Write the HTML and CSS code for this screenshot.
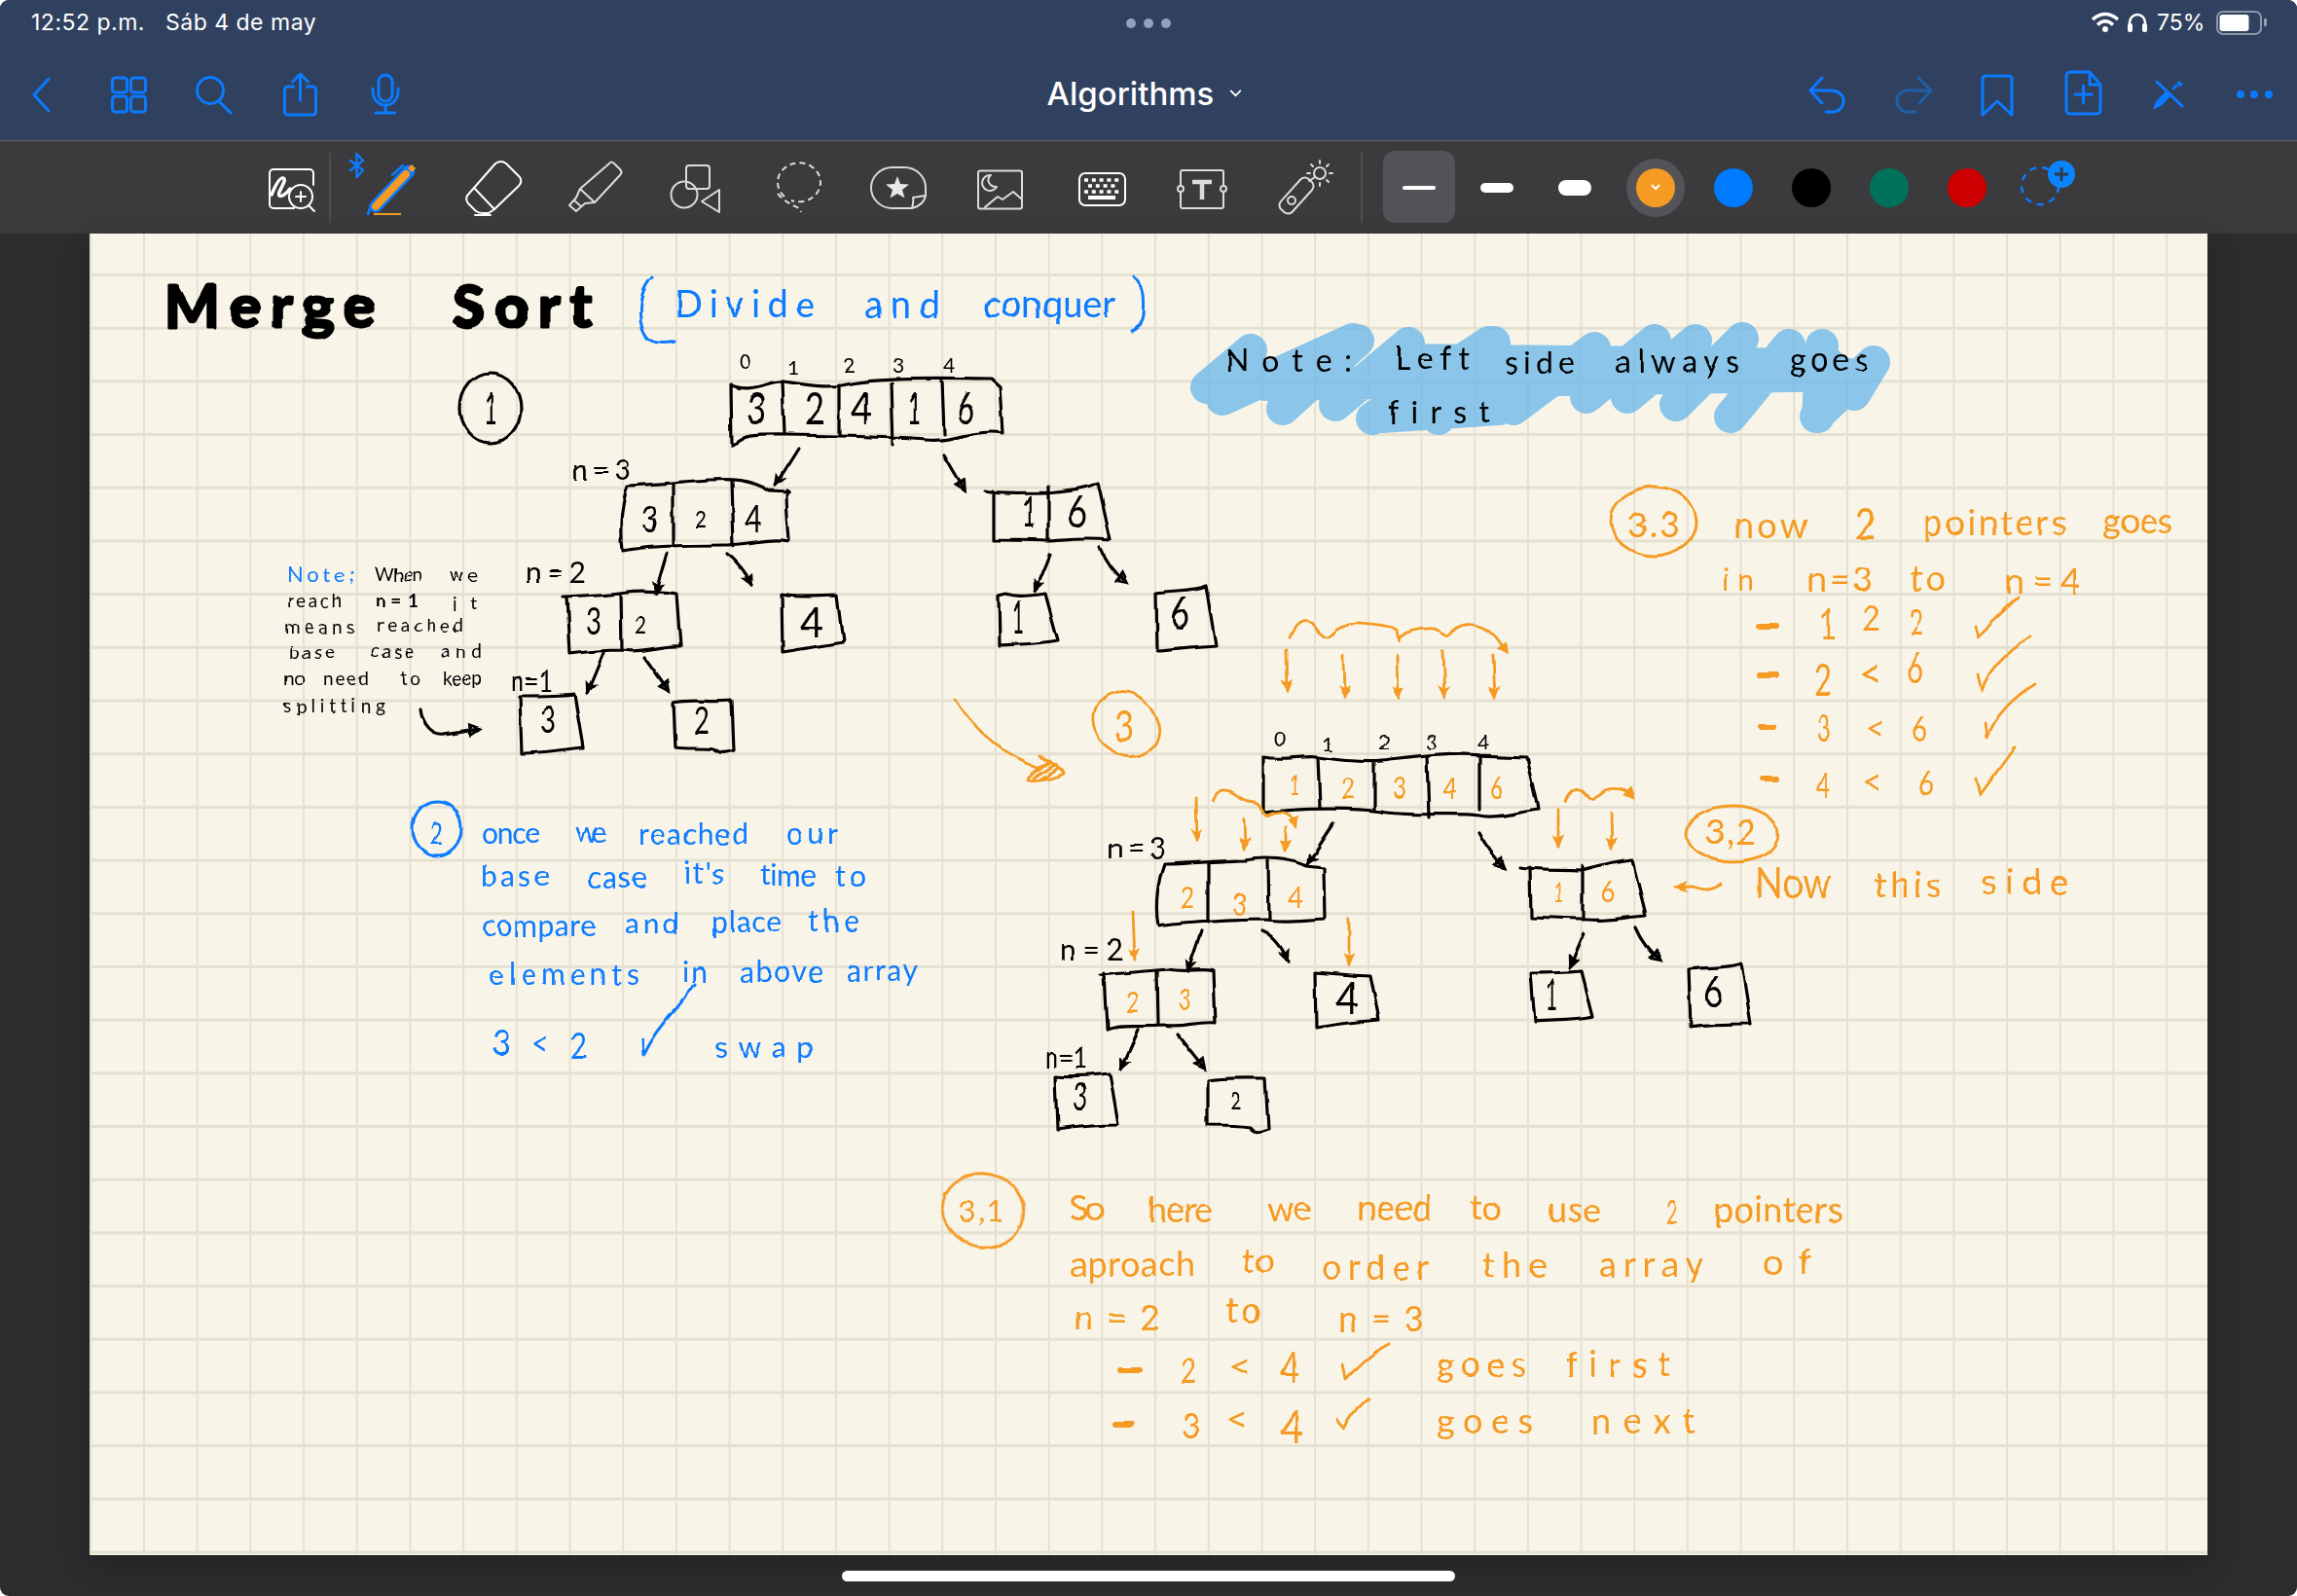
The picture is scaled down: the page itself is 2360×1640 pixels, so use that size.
FILE: index.html
```html
<!DOCTYPE html>
<html lang="es">
<head>
<meta charset="utf-8">
<title>Algorithms</title>
<link rel="stylesheet" href="styles.css">
</head>
<body>
<div class="app">
  <header class="chrome">
    <div class="status">
      <div class="status-left"><span>12:52 p.m.</span><span class="date">Sáb 4 de may</span></div>
      <div class="dots"><i></i><i></i><i></i></div>
      <div class="status-right">
        <svg class="st-wifi" viewBox="2145 10 32 26"><path d="M2148 20 Q2161 9 2174 20 M2153 25.5 Q2161 18 2169 25.5" /><circle cx="2161" cy="30" r="3"/></svg>
        <svg class="st-head" viewBox="2185 12 24 24"><path d="M2189 32 V24 a8 8 0 0 1 16 0 V32"/><rect x="2187" y="25" width="5" height="9" rx="2"/><rect x="2202" y="25" width="5" height="9" rx="2"/></svg>
        <span class="pct">75%</span>
        <svg class="st-batt" viewBox="2277 10 54 28"><rect class="shell" x="2279" y="13" width="45" height="23" rx="6"/><rect class="fill" x="2281.5" y="16" width="30" height="17" rx="3"/><rect class="cap" x="2327" y="20" width="3" height="8" rx="1"/></svg>
      </div>
    </div>
    <nav class="nav">
      <div class="nav-left">
        <svg class="nb" viewBox="-2 45 88.5 99"><path d="M50 80 L35 96.5 L50 113"/></svg>
        <svg class="nb" viewBox="86.5 45 88.5 99"><rect x="115" y="79" width="15" height="15" rx="3"/><rect x="134" y="79" width="15" height="15" rx="3"/><rect x="115" y="98" width="15" height="16" rx="3"/><rect x="134" y="98" width="15" height="16" rx="3"/></svg>
        <svg class="nb" viewBox="175 45 88.5 99"><circle cx="216" cy="92" r="13.5"/><path d="M225 103 L237 115"/></svg>
        <svg class="nb" viewBox="263.5 45 88.5 99"><path d="M301 88 H295 a3 3 0 0 0 -3 3 V114 a3 3 0 0 0 3 3 H321 a3 3 0 0 0 3 -3 V91 a3 3 0 0 0 -3 -3 H315 M308 102 V75 M300 83 L308 75 L316 83"/></svg>
        <svg class="nb" viewBox="352 45 88.5 99"><rect x="389" y="76" width="14" height="27" rx="7"/><path d="M383 90 V93 a13 14 0 0 0 26 0 V90 M396 107 V114 M386 115 H406"/></svg>
      </div>
      <div class="doc-title">Algorithms<svg class="title-chev" viewBox="0 0 14 9"><path d="M1 1 L7 7 L13 1"/></svg></div>
      <div class="nav-right">
        <svg class="nb" viewBox="1833 45 88 99"><path d="M1872 79 L1860 92 L1872 105 M1860 92 H1880 a13 10 0 0 1 14 11 a11 11 0 0 1 -12 11 H1876"/></svg>
        <svg class="nb dim" viewBox="1921 45 88 99"><path d="M1971 79 L1984 92 L1972 105 M1984 92 H1964 a13 10 0 0 0 -15 11 a11 11 0 0 0 12 11 H1968"/></svg>
        <svg class="nb" viewBox="2009 45 88 99"><path d="M2037 80 a3 3 0 0 1 3 -3 H2064 a3 3 0 0 1 3 3 V117 L2052 103 L2037 117 Z"/></svg>
        <svg class="nb" viewBox="2097 45 88 99"><path d="M2127 73 H2147 L2158 86 V112 a4 4 0 0 1 -4 4 H2127 a4 4 0 0 1 -4 -4 V77 a4 4 0 0 1 4 -4 Z M2147 73 V86 H2158 M2140.5 87 V105 M2132 96 H2149"/></svg>
        <svg class="nb" viewBox="2185 45 88 99"><path d="M2216 83 L2242 108 M2233 90 L2236 87"/><path class="solid-blue" d="M2212 111.5 L2215 103 L2226 92 L2231 97 L2220 108 Z M2236.5 84.5 L2239 82 L2243 85.5 L2240 88.5 Z"/></svg>
        <svg class="nb solid" viewBox="2273 45 88 99"><circle cx="2302" cy="96" r="4"/><circle cx="2316" cy="96" r="4"/><circle cx="2331" cy="96" r="4"/></svg>
      </div>
    </nav>
  </header>

  <div class="toolbar">
    <svg class="tool white" viewBox="247 145 104 95">
      <path d="M302 214 H281 a4 4 0 0 1 -4 -4 V178 a4 4 0 0 1 4 -4 H318 a4 4 0 0 1 4 4 V190"/>
      <path class="thick" d="M279 200 C284 188 288 182 291 183 C296 185 284 198 287 201 C290 203 296 197 298 194"/>
      <circle cx="309" cy="202" r="12"/><path d="M304 202 H314 M309 197 V207 M317 211 L323 217"/>
    </svg>
    <i class="sep sep-a"></i>
    <svg class="tool" viewBox="351 145 104 95">
      <path class="blue-2" d="M360 165 L373 175 L366.5 182 V158 L373 165 L360 175"/>
      <path class="pen-outer" d="M386 212 L420 176"/>
      <path class="pen-inner" d="M386 212 L417 179"/>
      <path class="pen-cap" d="M421 175 L425 171"/>
      <path class="blue-2" d="M403 180 L414 170 M378 220 L381 211"/>
      <rect class="orange-fill" x="384" y="219" width="28" height="2"/>
    </svg>
    <svg class="tool white" viewBox="455 145 104 95">
      <path d="M509 168 Q515 164 520 168 L534 182 Q537 187 533 191 L508 215 L487 193 Z"/>
      <path d="M487 193 L480 201 Q478 205 481 209 L489 217 Q492 219 497 219 H502 L508 215 M488 221 H504"/>
    </svg>
    <svg class="tool grey" viewBox="559 145 104 95">
      <path d="M626 168 Q628 165 631 168 L637 174 Q640 177 637 180 L611 208 L596 194 Z M596 194 L592 203 L585 211 L592 217 L601 209 L611 208 M590 206 L597 212"/>
    </svg>
    <svg class="tool grey" viewBox="663 145 104 95">
      <rect x="705" y="170" width="24" height="24" rx="3"/><circle cx="703" cy="200" r="13.5"/><path d="M739 195 V218 L721 207 Z"/>
    </svg>
    <svg class="tool grey" viewBox="767 145 104 95">
      <path class="dash" d="M806 202 A22 20 0 1 1 813 206"/><path class="dash" d="M799 199 Q807 208 817 212 Q822 214 823 218"/>
    </svg>
    <svg class="tool grey" viewBox="871 145 104 95">
      <path d="M937 214 H917 A22 21 0 0 1 895 193 A22 21 0 0 1 917 172 H929 A22 21 0 0 1 951 193 V201 Q949 211 937 214 Q939 206 938 203 Q944 202 951 201"/>
      <path class="star" d="M922 181 L925 189 L934 189.5 L927 195 L929.5 203.5 L922 199 L914.5 203.5 L917 195 L910 189.5 L919 189 Z"/>
    </svg>
    <svg class="tool grey" viewBox="975 145 104 95">
      <rect x="1005" y="175.5" width="45" height="39" rx="2"/><path class="moon" d="M1018 180 A8 8 0 1 0 1024 192 A8.5 7 0 0 1 1018 180 Z"/><path d="M1012 213 L1025 202 L1030 205 L1041 197 L1049 204"/>
    </svg>
    <svg class="tool white" viewBox="1079 145 104 95">
      <rect x="1109" y="178" width="47" height="33" rx="6"/>
      <path class="keys" d="M1114 185 H1151 M1118 191 H1148 M1114 197 H1151"/>
      <rect class="white-fill" x="1118" y="201" width="28" height="4"/>
    </svg>
    <svg class="tool grey" viewBox="1183 145 104 95">
      <path d="M1213 190 V177 a2 2 0 0 1 2 -2 H1255 a2 2 0 0 1 2 2 V190 M1213 198 V212 a2 2 0 0 0 2 2 H1255 a2 2 0 0 0 2 -2 V198"/>
      <circle cx="1213" cy="194" r="3"/><circle cx="1257" cy="194" r="3"/>
      <path class="t-bar" d="M1225 187 H1245 M1235 187 V205"/>
    </svg>
    <svg class="tool grey" viewBox="1287 145 104 95">
      <rect x="1311" y="193" width="42" height="16" rx="6" transform="rotate(-48 1332 201)"/><circle cx="1327" cy="206" r="4"/>
      <path d="M1345 186 L1351 182"/><circle cx="1356" cy="178" r="6"/><path d="M1356 165 V168 M1356 188 V191 M1343 178 H1346 M1366 178 H1369 M1347 169 L1349 171 M1365 169 L1363 171 M1365 187 L1363 185"/>
    </svg>
    <i class="sep sep-b"></i>
    <div class="cell selected"><i class="weight w1"></i></div>
    <div class="cell"><i class="weight w2"></i></div>
    <div class="cell"><i class="weight w3"></i></div>
    <div class="cell cell-first-color"><div class="ring"><div class="swatch c-orange"><svg class="sw-chev" viewBox="0 0 10 7"><path d="M1 1 L5 5 L9 1"/></svg></div></div></div>
    <div class="cell"><div class="swatch c-blue"></div></div>
    <div class="cell"><div class="swatch c-black"></div></div>
    <div class="cell"><div class="swatch c-green"></div></div>
    <div class="cell"><div class="swatch c-red"></div></div>
    <svg class="add-color" viewBox="2061 145 80 95">
      <ellipse class="add-dash" cx="2096" cy="191" rx="19" ry="19"/>
      <circle class="add-bg" cx="2118" cy="179" r="14"/>
      <path class="add-plus" d="M2111 179 H2125 M2118 172 V186"/>
    </svg>
  </div>

  <main class="stage">
    <div class="page">
      <svg class="ink" viewBox="92 240 2176 1358">
        <defs>
          <filter id="wobL" filterUnits="userSpaceOnUse" x="92" y="240" width="2176" height="1358"><feTurbulence type="fractalNoise" baseFrequency="0.03" numOctaves="2" seed="5"/><feDisplacementMap in="SourceGraphic" scale="6" xChannelSelector="R" yChannelSelector="G"/></filter>
          <filter id="wobT" filterUnits="userSpaceOnUse" x="92" y="240" width="2176" height="1358"><feTurbulence type="fractalNoise" baseFrequency="0.04" numOctaves="1" seed="9"/><feDisplacementMap in="SourceGraphic" scale="4" xChannelSelector="R" yChannelSelector="G"/></filter>
          <marker id="ahB" viewBox="0 0 14 14" refX="11" refY="7" markerWidth="15" markerHeight="15" markerUnits="userSpaceOnUse" orient="auto"><path d="M0 1 L13 7 L0 13 L3 7 Z" fill="#000"/></marker>
          <marker id="adB" viewBox="0 0 14 14" refX="8" refY="7" markerWidth="17" markerHeight="17" markerUnits="userSpaceOnUse" orient="auto"><path d="M1 1 L13 7 L1 13 Z M4 5 L4 9 L8 7 Z" fill="#000" fill-rule="evenodd"/></marker>
          <marker id="ahO" viewBox="0 0 14 14" refX="11" refY="7" markerWidth="15" markerHeight="15" markerUnits="userSpaceOnUse" orient="auto"><path d="M0 1 L13 7 L0 13 L3 7 Z" fill="#f59a23"/></marker>
          <marker id="adO" viewBox="0 0 14 14" refX="8" refY="7" markerWidth="15" markerHeight="15" markerUnits="userSpaceOnUse" orient="auto"><path d="M1 1 L13 7 L1 13 Z" fill="#f59a23"/></marker>
        </defs>

        <path class="marker" d="M1240 398 L1285 360 M1256 410 L1390 349 M1318 420 L1395 350 M1372 416 L1447 353 M1410 430 L1530 352 M1478 430 L1535 352 M1555 420 L1638 358 M1630 408 L1700 350 M1672 408 L1742 350 M1722 416 L1790 348 M1778 428 L1838 355 M1868 428 L1872 355 M1866 428 L1925 372 M1905 405 L1925 372 M1300 395 L1900 385 M1440 370 L1880 375 M1420 428 L1540 420"/>

        <g class="strokes black" filter="url(#wobL)">
          <ellipse cx="504" cy="420" rx="31" ry="36"/>
          <path d="M751 396 C775 405 790 390 805 392 S850 400 870 395 S930 388 1018 390 L1027 398 L1030 445 C1000 440 980 455 950 452 S870 448 810 447 S770 452 752 457 Z M804 392 L806 446 M862 396 L862 447 M916 394 L918 458 M968 391 L970 446"/>
          <path d="M646 499 C670 498 700 495 730 493 C750 492 770 492 790 504 L811 505 L808 503 C808 530 811 550 811 556 C790 552 770 560 745 560 C720 560 670 560 640 566 C637 540 640 515 646 499 Z M691 498 L691 559 M752 495 L754 561"/>
          <path d="M1012 504 C1030 508 1050 506 1075 506 C1095 504 1120 502 1128 496 L1141 555 C1110 552 1090 556 1075 556 C1060 555 1030 555 1021 555 L1021 504 M1077 500 L1077 555"/>
          <path d="M579 613 C600 612 630 610 645 608 C660 606 680 608 695 610 L699 664 C680 662 660 672 640 668 C620 668 600 670 586 672 L583 613 M638 610 L639 668"/>
          <path d="M803 611 C820 615 840 612 860 612 L866 660 C850 662 820 668 804 670 Z"/>
          <path d="M1026 612 L1034 610 C1045 614 1060 612 1074 610 L1087 658 C1065 662 1045 662 1027 663 Z"/>
          <path d="M1187 609 C1205 606 1225 608 1240 602 L1250 664 C1230 665 1205 668 1188 669 Z"/>
          <path d="M534 716 C555 716 575 716 590 714 L599 768 C580 770 555 774 536 774 Z"/>
          <path d="M692 722 C710 718 730 722 752 720 L754 772 C745 775 740 776 733 770 C720 768 705 770 694 768 Z"/>
          <path marker-end="url(#ahB)" d="M820 460 L796 498"/>
          <path marker-end="url(#adB)" d="M970 468 C978 482 984 492 990 502"/>
          <path marker-end="url(#ahB)" d="M685 569 L673 610"/>
          <path marker-end="url(#ahB)" d="M747 570 C758 578 766 590 772 601"/>
          <path marker-end="url(#ahB)" d="M1078 570 L1063 607"/>
          <path marker-end="url(#adB)" d="M1130 563 C1136 578 1146 590 1155 597"/>
          <path marker-end="url(#ahB)" d="M620 671 L603 712"/>
          <path marker-end="url(#adB)" d="M662 675 L686 708"/>
          <path marker-end="url(#adB)" d="M432 729 C434 745 444 757 457 755 C466 754 472 752 490 750"/>
          <path d="M1298 778 C1320 782 1340 776 1354 778 S1400 784 1420 782 S1490 772 1520 776 L1568 778 L1580 832 C1560 834 1540 842 1520 838 C1490 834 1450 840 1420 834 C1390 830 1340 830 1298 835 Z M1354 778 L1356 830 M1412 783 L1412 832 M1466 778 L1468 840 M1520 776 L1520 832"/>
          <path d="M1196 888 C1220 888 1250 884 1280 884 C1300 880 1325 882 1342 890 L1360 892 L1361 944 C1340 945 1320 948 1300 945 C1280 945 1210 948 1190 952 C1186 930 1190 905 1196 888 Z M1241 888 L1241 948 M1303 884 L1304 945"/>
          <path d="M1562 892 C1580 895 1600 894 1625 895 C1645 890 1660 886 1677 884 L1691 940 C1665 942 1650 946 1630 944 C1605 944 1585 942 1573 942 L1572 892 M1626 890 L1626 942"/>
          <path d="M1130 1002 C1150 1000 1180 998 1200 996 C1220 1000 1235 994 1247 998 L1249 1052 C1230 1050 1215 1058 1195 1054 C1175 1056 1150 1052 1137 1058 L1134 1000 M1189 998 L1190 1052"/>
          <path d="M1352 999 L1388 1002 C1395 1003 1400 1002 1408 1003 L1417 1048 C1395 1050 1375 1052 1353 1056 Z"/>
          <path d="M1573 1000 C1590 1000 1600 1000 1624 998 L1636 1045 C1615 1050 1595 1048 1577 1050 Z"/>
          <path d="M1735 996 C1750 994 1775 995 1789 990 L1799 1052 C1780 1052 1755 1052 1737 1055 Z"/>
          <path d="M1084 1105 C1100 1106 1125 1105 1140 1103 L1149 1156 C1125 1156 1105 1158 1086 1161 Z"/>
          <path d="M1241 1110 C1260 1107 1280 1108 1300 1108 L1303 1160 C1295 1163 1290 1165 1285 1158 C1270 1156 1255 1156 1241 1156 Z"/>
          <path marker-end="url(#ahB)" d="M1370 847 L1343 888"/>
          <path marker-end="url(#adB)" d="M1519 855 C1526 868 1534 880 1545 890"/>
          <path marker-end="url(#ahB)" d="M1234 957 L1220 998"/>
          <path marker-end="url(#ahB)" d="M1296 957 C1308 962 1318 975 1323 988"/>
          <path marker-end="url(#ahB)" d="M1627 959 L1612 994"/>
          <path marker-end="url(#adB)" d="M1680 952 C1686 966 1696 978 1705 985"/>
          <path marker-end="url(#ahB)" d="M1170 1058 L1152 1098"/>
          <path marker-end="url(#adB)" d="M1210 1063 L1236 1096"/>
        </g>

        <g class="strokes orange" filter="url(#wobL)">
          <path d="M1190 745 C1196 775 1160 785 1145 772 C1120 760 1118 730 1130 720 C1145 708 1175 700 1190 745 Z"/>
          <path d="M981 718 C995 740 1010 755 1023 765 C1035 775 1050 782 1066 788 M1068 776 C1075 782 1092 788 1093 795 C1085 800 1065 803 1055 803 C1060 795 1068 785 1078 785 M1062 800 L1085 785 M1070 801 L1086 790 M1060 796 L1080 782"/>
          <ellipse cx="1699" cy="536" rx="44" ry="36"/>
          <ellipse cx="1010" cy="1244" rx="42" ry="37" transform="rotate(12 1010 1244)"/>
          <ellipse cx="1780" cy="857" rx="47" ry="29"/>
          <path d="M1326 655 C1332 640 1340 636 1347 640 C1355 648 1358 658 1366 654 C1375 645 1385 640 1397 641 C1415 642 1430 645 1436 647 L1438 659 C1440 647 1458 644 1475 645 C1482 648 1484 660 1490 652 C1497 640 1515 638 1530 648 C1538 654 1542 662 1546 668" marker-end="url(#adO)"/>
          <path marker-end="url(#ahO)" d="M1322 668 L1323 711"/><path marker-end="url(#ahO)" d="M1380 674 L1381 716"/><path marker-end="url(#ahO)" d="M1436 673 L1437 718"/><path marker-end="url(#ahO)" d="M1482 670 L1484 716"/><path marker-end="url(#ahO)" d="M1534 673 L1536 717"/>
          <path d="M1245 823 C1252 808 1262 810 1272 818 C1280 825 1285 822 1292 825 C1298 833 1298 840 1304 837 C1312 833 1325 832 1331 848" marker-end="url(#adO)"/>
          <path d="M1607 823 C1612 810 1622 806 1630 816 C1636 824 1640 820 1650 812 C1660 808 1672 812 1678 818" marker-end="url(#adO)"/>
          <path marker-end="url(#ahO)" d="M1229 820 L1230 863"/><path marker-end="url(#ahO)" d="M1278 840 L1279 872"/><path marker-end="url(#ahO)" d="M1320 850 L1320 875"/>
          <path marker-end="url(#ahO)" d="M1601 832 L1601 870"/><path marker-end="url(#ahO)" d="M1655 835 L1656 872"/>
          <path marker-end="url(#ahO)" d="M1164 937 L1166 987"/><path marker-end="url(#ahO)" d="M1385 943 L1385 991"/>
          <path marker-end="url(#ahO)" d="M1768 908 C1760 916 1750 915 1738 911 L1722 912"/>
          <path d="M2029 643 L2032 654 L2074 614 M2032 693 L2036 710 C2045 685 2065 668 2086 655 M2039 743 L2041 758 C2050 735 2070 715 2092 702 M2030 800 L2034 816 L2069 768"/>
          <path d="M1380 1402 L1383 1418 C1395 1405 1410 1390 1428 1381 M1374 1458 L1381 1469 C1388 1455 1396 1445 1406 1437"/>
          <path class="dash-mark" d="M1807 644 H1824 M1808 695 H1824 M1807 746 H1823 M1811 800 H1825 M1151 1408 H1170 M1147 1463 H1162"/>
        </g>

        <g class="strokes blue-ink" filter="url(#wobL)">
          <path d="M670 285 C652 305 655 340 668 350 Q678 356 692 352 M1165 285 Q1178 290 1175 325 Q1174 335 1162 339"/>
          <ellipse cx="449" cy="851" rx="25" ry="28"/>
          <path d="M660 1068 L661 1085 C675 1055 695 1040 713 1012"/>
        </g>

        <g filter="url(#wobT)">
          <text class="title" x="169" y="336" textLength="216">Merge</text>
          <text class="title" x="465" y="336" textLength="143">Sort</text>

          <g class="blue-ink-t fs38">
            <text x="693" y="326" textLength="144">Divide</text>
            <text x="888" y="327" textLength="77">and</text>
            <text x="1010" y="326" textLength="136">conquer</text>
          </g>

          <g class="ink-t fs32">
            <text x="1259" y="382" textLength="131">Note:</text>
            <text x="1433" y="380" textLength="77">Left</text>
            <text x="1546" y="384" textLength="72">side</text>
            <text x="1660" y="383" textLength="127">always</text>
            <text x="1839" y="381" textLength="80">goes</text>
            <text x="1426" y="435" textLength="105">first</text>
          </g>

          <g class="ink-t idx mid">
            <text x="765" y="379">0</text><text x="815" y="385">1</text><text x="872" y="383">2</text><text x="923" y="383">3</text><text x="975" y="383">4</text>
            <text x="1315" y="767">0</text><text x="1364" y="773">1</text><text x="1422" y="770">2</text><text x="1471" y="770">3</text><text x="1524" y="770">4</text>
          </g>
          <g class="ink-t d-xl mid">
            <text x="504" y="436" textLength="14" lengthAdjust="spacingAndGlyphs">1</text>
            <text x="777" y="436" textLength="20" lengthAdjust="spacingAndGlyphs">3</text>
            <text x="837" y="436" textLength="20" lengthAdjust="spacingAndGlyphs">2</text>
            <text x="885" y="436" textLength="22" lengthAdjust="spacingAndGlyphs">4</text>
            <text x="940" y="436" textLength="14" lengthAdjust="spacingAndGlyphs">1</text>
            <text x="992" y="436" textLength="18" lengthAdjust="spacingAndGlyphs">6</text>
            <text x="1057" y="542" textLength="14" lengthAdjust="spacingAndGlyphs">1</text>
            <text x="834" y="656" textLength="24" lengthAdjust="spacingAndGlyphs">4</text>
            <text x="1046" y="651" textLength="12" lengthAdjust="spacingAndGlyphs">1</text>
            <text x="1212" y="646" textLength="20" lengthAdjust="spacingAndGlyphs">6</text>
            <text x="1107" y="542" textLength="20" lengthAdjust="spacingAndGlyphs">6</text>
            <text x="1384" y="1043" textLength="24" lengthAdjust="spacingAndGlyphs">4</text>
            <text x="1594" y="1038" textLength="12" lengthAdjust="spacingAndGlyphs">1</text>
            <text x="1760" y="1035" textLength="20" lengthAdjust="spacingAndGlyphs">6</text>
          </g>
          <g class="ink-t d-l mid">
            <text x="668" y="547" textLength="16" lengthAdjust="spacingAndGlyphs">3</text>
            <text x="774" y="547" textLength="18" lengthAdjust="spacingAndGlyphs">4</text>
            <text x="610" y="652" textLength="16" lengthAdjust="spacingAndGlyphs">3</text>
            <text x="563" y="754" textLength="16" lengthAdjust="spacingAndGlyphs">3</text>
            <text x="721" y="754" textLength="16" lengthAdjust="spacingAndGlyphs">2</text>
            <text x="1110" y="1140" textLength="14" lengthAdjust="spacingAndGlyphs">3</text>
          </g>
          <g class="ink-t d-s mid">
            <text x="720" y="543" textLength="12" lengthAdjust="spacingAndGlyphs">2</text>
            <text x="658" y="651" textLength="12" lengthAdjust="spacingAndGlyphs">2</text>
            <text x="1269" y="1140" textLength="11" lengthAdjust="spacingAndGlyphs">2</text>
          </g>
          <g class="ink-t fs30">
            <text x="588" y="494" textLength="60">n=3</text>
            <text x="539" y="599" textLength="63">n=2</text>
            <text x="525" y="711" textLength="43" lengthAdjust="spacingAndGlyphs">n=1</text>
            <text x="1138" y="882" textLength="60">n=3</text>
            <text x="1089" y="987" textLength="65">n=2</text>
            <text x="1074" y="1098" textLength="43" lengthAdjust="spacingAndGlyphs">n=1</text>
          </g>

          <g class="ink-t fs19">
            <text class="blue-ink-t fs22" x="295" y="598" textLength="69">Note;</text>
            <text x="385" y="597" textLength="49">When</text>
            <text x="462" y="597" textLength="29">we</text>
            <text x="295" y="624" textLength="56">reach</text>
            <text class="bold" x="386" y="624" textLength="44">n=1</text>
            <text x="465" y="627" textLength="25">it</text>
            <text x="293" y="651" textLength="71">means</text>
            <text x="388" y="649" textLength="88">reached</text>
            <text x="297" y="677" textLength="47">base</text>
            <text x="381" y="676" textLength="44">case</text>
            <text x="453" y="676" textLength="42">and</text>
            <text x="292" y="704" textLength="21">no</text>
            <text x="332" y="704" textLength="47">need</text>
            <text x="411" y="704" textLength="21">to</text>
            <text x="455" y="704" textLength="40">keep</text>
            <text x="291" y="732" textLength="105">splitting</text>
          </g>

          <g class="blue-ink-t fs30">
            <text x="448" y="867" text-anchor="middle" textLength="14" lengthAdjust="spacingAndGlyphs">2</text>
            <text x="495" y="867" textLength="60">once</text>
            <text x="591" y="866" textLength="32">we</text>
            <text x="656" y="868" textLength="113">reached</text>
            <text x="808" y="867" textLength="53">our</text>
            <text x="494" y="911" textLength="70">base</text>
            <text x="604" y="912" textLength="60">case</text>
            <text x="703" y="908" textLength="41">it's</text>
            <text x="781" y="910" textLength="57">time</text>
            <text x="858" y="911" textLength="32">to</text>
            <text x="495" y="962" textLength="117">compare</text>
            <text x="642" y="960" textLength="56">and</text>
            <text x="731" y="958" textLength="72">place</text>
            <text x="830" y="957" textLength="53">the</text>
            <text x="502" y="1012" textLength="155">elements</text>
            <text x="701" y="1010" textLength="26">in</text>
            <text x="760" y="1009" textLength="86">above</text>
            <text x="870" y="1008" textLength="73">array</text>
            <text class="fs36" x="505" y="1085" textLength="20" lengthAdjust="spacingAndGlyphs">3</text>
            <text class="fs36" x="546" y="1085" textLength="17" lengthAdjust="spacingAndGlyphs">&lt;</text>
            <text class="fs36" x="586" y="1087" textLength="17" lengthAdjust="spacingAndGlyphs">2</text>
            <text x="735" y="1087" textLength="100">swap</text>
          </g>

          <g class="or-t d-m mid">
            <text x="1330" y="818" textLength="10" lengthAdjust="spacingAndGlyphs">1</text>
            <text x="1385" y="821" textLength="14" lengthAdjust="spacingAndGlyphs">2</text>
            <text x="1438" y="821" textLength="14" lengthAdjust="spacingAndGlyphs">3</text>
            <text x="1490" y="821" textLength="15" lengthAdjust="spacingAndGlyphs">4</text>
            <text x="1538" y="821" textLength="14" lengthAdjust="spacingAndGlyphs">6</text>
            <text x="1220" y="933" textLength="14" lengthAdjust="spacingAndGlyphs">2</text>
            <text x="1274" y="940" textLength="16" lengthAdjust="spacingAndGlyphs">3</text>
            <text x="1331" y="933" textLength="16" lengthAdjust="spacingAndGlyphs">4</text>
            <text x="1601" y="927" textLength="10" lengthAdjust="spacingAndGlyphs">1</text>
            <text x="1652" y="927" textLength="15" lengthAdjust="spacingAndGlyphs">6</text>
            <text x="1163" y="1040" textLength="14" lengthAdjust="spacingAndGlyphs">2</text>
            <text x="1217" y="1038" textLength="13" lengthAdjust="spacingAndGlyphs">3</text>
            <text class="fs44" x="1155" y="762" textLength="20" lengthAdjust="spacingAndGlyphs">3</text>
          </g>

          <g class="or-t fs36">
            <text x="1672" y="552" textLength="54">3.3</text>
            <text x="1782" y="553" textLength="75">now</text>
            <text class="fs44" x="1906" y="554" textLength="21" lengthAdjust="spacingAndGlyphs">2</text>
            <text x="1976" y="550" textLength="147">pointers</text>
            <text x="2160" y="548" textLength="72">goes</text>
            <text class="fs30" x="1769" y="607" textLength="33">in</text>
            <text x="1857" y="608" textLength="67">n=3</text>
            <text x="1962" y="607" textLength="37">to</text>
            <text x="2060" y="610" textLength="78">n=4</text>

            <text class="fs44" x="1870" y="657" textLength="16" lengthAdjust="spacingAndGlyphs">1</text>
            <text x="1913" y="648" textLength="19" lengthAdjust="spacingAndGlyphs">2</text>
            <text x="1962" y="652" textLength="14" lengthAdjust="spacingAndGlyphs">2</text>
            <text class="fs44" x="1864" y="714" textLength="18" lengthAdjust="spacingAndGlyphs">2</text>
            <text class="fs44" x="1910" y="707" textLength="24" lengthAdjust="spacingAndGlyphs">&lt;</text>
            <text class="fs44" x="1959" y="702" textLength="17" lengthAdjust="spacingAndGlyphs">6</text>
            <text x="1867" y="761" textLength="14" lengthAdjust="spacingAndGlyphs">3</text>
            <text x="1917" y="761" textLength="19" lengthAdjust="spacingAndGlyphs">&lt;</text>
            <text x="1964" y="762" textLength="16" lengthAdjust="spacingAndGlyphs">6</text>
            <text x="1867" y="820" textLength="13" lengthAdjust="spacingAndGlyphs">4</text>
            <text x="1913" y="816" textLength="21" lengthAdjust="spacingAndGlyphs">&lt;</text>
            <text x="1971" y="818" textLength="16" lengthAdjust="spacingAndGlyphs">6</text>

            <text x="1752" y="868" textLength="52">3,2</text>
            <text class="fs44" x="1803" y="923" textLength="79" lengthAdjust="spacingAndGlyphs">Now</text>
            <text x="1925" y="922" textLength="70">this</text>
            <text x="2036" y="919" textLength="89">side</text>

            <text class="fs30" x="985" y="1255" textLength="46">3,1</text>
            <text x="1099" y="1254" textLength="36">So</text>
            <text x="1179" y="1256" textLength="67">here</text>
            <text x="1302" y="1255" textLength="46">we</text>
            <text x="1394" y="1254" textLength="77">need</text>
            <text x="1510" y="1254" textLength="33">to</text>
            <text x="1590" y="1256" textLength="55">use</text>
            <text x="1712" y="1258" textLength="12" lengthAdjust="spacingAndGlyphs">2</text>
            <text x="1761" y="1256" textLength="132">pointers</text>
            <text x="1099" y="1312" textLength="129">aproach</text>
            <text x="1276" y="1308" textLength="34">to</text>
            <text x="1358" y="1315" textLength="110">order</text>
            <text x="1523" y="1313" textLength="66">the</text>
            <text x="1643" y="1312" textLength="107">array</text>
            <text x="1812" y="1310" textLength="48">of</text>
            <text x="1103" y="1367" textLength="89">n=2</text>
            <text x="1259" y="1359" textLength="37">to</text>
            <text x="1375" y="1368" textLength="88">n=3</text>
            <text x="1213" y="1421" textLength="16" lengthAdjust="spacingAndGlyphs">2</text>
            <text x="1262" y="1417" textLength="24" lengthAdjust="spacingAndGlyphs">&lt;</text>
            <text class="fs44" x="1316" y="1421" textLength="19" lengthAdjust="spacingAndGlyphs">4</text>
            <text x="1476" y="1415" textLength="92">goes</text>
            <text x="1608" y="1415" textLength="109">first</text>
            <text x="1214" y="1478" textLength="19" lengthAdjust="spacingAndGlyphs">3</text>
            <text x="1258" y="1471" textLength="25" lengthAdjust="spacingAndGlyphs">&lt;</text>
            <text class="fs44" x="1315" y="1482" textLength="24" lengthAdjust="spacingAndGlyphs">4</text>
            <text x="1476" y="1473" textLength="99">goes</text>
            <text x="1635" y="1473" textLength="107">next</text>
          </g>
        </g>
      </svg>
    </div>
    <div class="home-bar"></div>
  </main>
</div>
</body>
</html>
```

FILE: styles.css
```css
* { box-sizing: border-box; }
html, body { margin: 0; padding: 0; background: #fff; }
body { width: 2360px; height: 1640px; overflow: hidden; font-family: Inter, Roboto, "Liberation Sans", sans-serif; }
.app { width: 2360px; height: 1640px; display: flex; flex-direction: column; border-radius: 9px; overflow: hidden; background: #2c2c2e; }

/* top chrome */
.chrome { background: #304160; height: 145px; border-bottom: 1px solid #5a5f68; color: #fff; flex: none; }
.status { height: 46px; display: flex; align-items: center; justify-content: space-between; padding: 0 30px 0 32px; position: relative; font-size: 23px; }
.status-left { display: flex; gap: 21px; letter-spacing: .5px; }
.dots { position: absolute; left: 1157px; top: 19px; display: flex; gap: 8px; }
.dots i { width: 10px; height: 10px; border-radius: 50%; background: #93a1bb; }
.status-right { display: flex; align-items: center; gap: 8px; }
.st-wifi { width: 32px; height: 26px; margin-right: -3px; }
.st-wifi path { fill: none; stroke: #fff; stroke-width: 3.5; }
.st-wifi circle { fill: #fff; }
.st-head { width: 24px; height: 24px; }
.st-head path { fill: none; stroke: #fff; stroke-width: 2.5; }
.st-head rect { fill: #fff; }
.st-batt { width: 54px; height: 28px; }
.shell { fill: none; stroke: rgba(255,255,255,.45); stroke-width: 2; }
.fill { fill: #fff; }
.cap { fill: rgba(255,255,255,.5); }
.pct { width: 52px; }

.nav { height: 98px; display: grid; grid-template-columns: 1fr auto 1fr; align-items: center; }
.nav-left, .nav-right { display: flex; }
.nav-right { justify-content: flex-end; margin-right: -1px; }
.nav-left { margin-left: -2px; }
.nb { width: 88.5px; height: 99px; flex: none; }
.nav-right .nb { width: 88px; }
.nb path, .nb rect, .nb circle { fill: none; stroke: #0a7aff; stroke-width: 3; stroke-linecap: round; stroke-linejoin: round; }
.nb.dim path { stroke: #1f5fa8; }
.nb.solid circle { fill: #0a7aff; stroke: none; }
.nb path.solid-blue { fill: #0a7aff; stroke: none; }
.doc-title { font-size: 33px; font-weight: 500; display: flex; align-items: center; gap: 16px; padding-right: 8px; margin-top: 1px; }
.title-chev { width: 13px; height: 8px; }
.title-chev path { fill: none; stroke: #fff; stroke-width: 2; }

/* toolbar */
.toolbar { height: 95px; background: #3b3b3d; flex: none; display: flex; align-items: center; padding-left: 247px; }
.tool { width: 104px; height: 95px; flex: none; }
.tool path, .tool rect, .tool circle, .tool ellipse { fill: none; stroke-width: 2; stroke-linecap: round; stroke-linejoin: round; }
.tool.white path, .tool.white rect, .tool.white circle { stroke: #fff; }
.tool.grey path, .tool.grey rect, .tool.grey circle, .tool.grey ellipse { stroke: #dcdcdc; }
.tool path.thick { stroke-width: 3.5; }
.tool path.keys { stroke-width: 3.5; stroke-dasharray: 4 3.8; stroke-linecap: butt; }
.tool rect.white-fill { fill: #fff; stroke: none; }
.tool path.dash { stroke-dasharray: 6 4; stroke-linecap: butt; }
.tool.grey path.star { fill: #e8e8e8; stroke: none; }
.tool.grey path.t-bar { stroke-width: 4.5; stroke-linecap: butt; }
.tool path.blue-2 { stroke: #0a7aff; stroke-width: 2.5; }
.tool path.pen-outer { stroke: #0a7aff; stroke-width: 13; }
.tool path.pen-inner { stroke: #f59a23; stroke-width: 8; }
.tool path.pen-cap { stroke: #f59a23; stroke-width: 6; stroke-linecap: butt; }
.tool rect.orange-fill { fill: #f59a23; stroke: none; }

.sep { display: block; width: 2px; background: #4d4d4f; flex: none; }
.sep-a { height: 72px; margin-left: -13px; margin-right: 11px; }
.sep-b { height: 72px; margin-left: 7px; margin-right: 18px; }
.cell { width: 80px; height: 95px; display: flex; align-items: center; justify-content: center; flex: none; }
.cell-first-color { margin-left: 3px; }
.cell.selected { position: relative; }
.cell.selected::before { content: ""; position: absolute; left: 3px; top: 10px; width: 74px; height: 74px; border-radius: 12px; background: #545458; }
.weight { display: block; background: #fff; position: relative; width: 34px; }
.w1 { height: 4px; border-radius: 2px; }
.w2 { height: 10px; border-radius: 5px; }
.w3 { height: 16px; border-radius: 8px; }
.ring { width: 60px; height: 60px; border-radius: 50%; background: #545458; display: flex; align-items: center; justify-content: center; }
.swatch { width: 40px; height: 40px; border-radius: 50%; display: flex; align-items: center; justify-content: center; }
.c-orange { background: #f59a23; }
.c-blue { background: #007aff; }
.c-black { background: #000; }
.c-green { background: #00725a; }
.c-red { background: #cc0000; }
.sw-chev { width: 10px; height: 7px; }
.sw-chev path { fill: none; stroke: #fff; stroke-width: 2; }
.add-color { width: 80px; height: 95px; flex: none; }
.add-dash { fill: none; stroke: #0a7aff; stroke-width: 2.5; stroke-dasharray: 7 6; }
.add-bg { fill: #0a84ff; }
.add-plus { fill: none; stroke: #2f3a4a; stroke-width: 3; }

/* stage */
.stage { flex: 1; display: flex; flex-direction: column; align-items: center; }
.page {
  width: 2176px; height: 1358px; flex: none; position: relative;
  background-color: #f8f5e8;
  background-image: linear-gradient(to bottom, #e4e1d2 3px, transparent 3px), linear-gradient(to right, #e4e1d2 2px, transparent 2px);
  background-size: 100% 54.7px, 54.7px 100%;
  background-position: 0 41px, 55px 0;
  box-shadow: 0 8px 26px rgba(0,0,0,.22);
}
.home-bar { width: 630px; height: 11px; margin-top: 16px; border-radius: 6px; background: #fff; flex: none; position: relative; }

/* ink */
.ink { position: absolute; inset: 0; width: 100%; height: 100%; display: block; }
.marker { fill: none; stroke: rgba(103,180,233,.75); stroke-width: 34; stroke-linecap: round; }
.strokes { fill: none; stroke-linecap: round; stroke-linejoin: round; }
.strokes.black { stroke: #000; stroke-width: 3.2; }
.strokes.orange { stroke: #f59a23; stroke-width: 2.8; }
.strokes.blue-ink { stroke: #0a7aff; stroke-width: 3; }
.dash-mark { stroke-width: 6; }

text { font-family: Lato, "Liberation Sans", sans-serif; font-variant-ligatures: none; }
.title { font-family: Lato, "Liberation Sans", sans-serif; font-size: 60px; font-weight: 700; fill: #000; stroke: #000; stroke-width: 3; stroke-linejoin: round; }
.ink-t { fill: #000; }
.or-t { fill: #f59a23; }
.blue-ink-t, text.blue-ink-t { fill: #0a7aff; }
.bold { font-weight: 700; }
.mid { text-anchor: middle; }
.fs38 { font-size: 38px; }
.fs36, text.fs36 { font-size: 36px; }
.fs32 { font-size: 32px; }
.fs30, text.fs30 { font-size: 30px; }
.fs22, text.fs22 { font-size: 22px; }
.fs19 { font-size: 19px; }
text.fs44 { font-size: 44px; }
.idx { font-size: 21px; }
.d-xl { font-size: 46px; }
.d-l { font-size: 38px; }
.d-m { font-size: 30px; }
.d-s { font-size: 25px; }
```
